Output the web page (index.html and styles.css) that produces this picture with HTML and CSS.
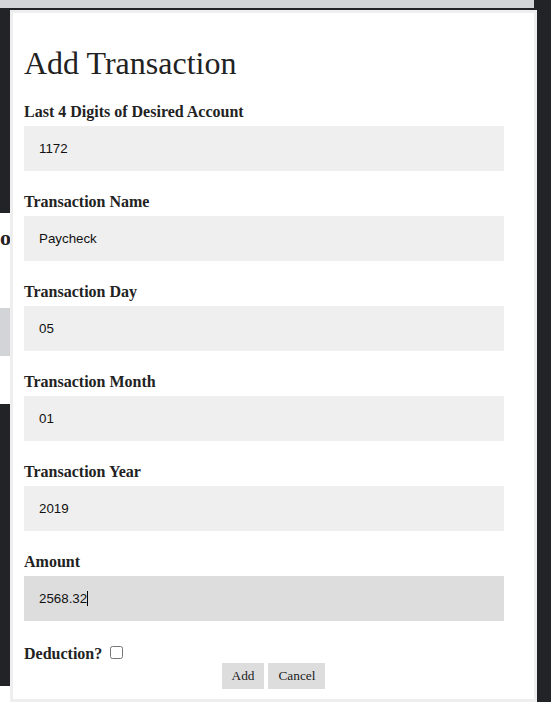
FILE: index.html
```html
<!DOCTYPE html>
<html lang="en">
<head>
<meta charset="utf-8">
<title>Add Transaction</title>
<link rel="stylesheet" href="styles.css">
</head>
<body>
<div class="page">
  <div class="topbar"></div>
  <div class="gap-top"></div>
  <div class="panel">
    <div class="panel-title">Do</div>
    <div class="panel-bar"></div>
  </div>
  <div class="gap-bottom"></div>
  <div class="footer"></div>
</div>

<div class="modal">
  <h1 class="modal-title">Add Transaction</h1>
  <form class="form">
    <label class="field">
      <span class="field-label">Last 4 Digits of Desired Account</span>
      <input class="field-input" type="text" value="1172">
    </label>
    <label class="field">
      <span class="field-label">Transaction Name</span>
      <input class="field-input" type="text" value="Paycheck">
    </label>
    <label class="field">
      <span class="field-label">Transaction Day</span>
      <input class="field-input" type="text" value="05">
    </label>
    <label class="field">
      <span class="field-label">Transaction Month</span>
      <input class="field-input" type="text" value="01">
    </label>
    <label class="field">
      <span class="field-label">Transaction Year</span>
      <input class="field-input" type="text" value="2019">
    </label>
    <label class="field">
      <span class="field-label">Amount</span>
      <span class="input-wrap">
        <input class="field-input field-input--active" id="amount" type="text" value="2568.32">
        <span class="caret"></span>
      </span>
    </label>
    <div class="deduction">
      <span class="field-label-inline">Deduction?</span> <input class="checkbox" type="checkbox">
    </div>
    <div class="actions">
      <button class="btn" type="button">Add</button>
      <button class="btn" type="button">Cancel</button>
    </div>
  </form>
</div>
</body>
</html>
```

FILE: styles.css
```css
html, body {
  margin: 0;
  padding: 0;
}

body {
  background: #222327;
  width: 551px;
  height: 702px;
  overflow: hidden;
  font-family: "Liberation Serif", "Times New Roman", serif;
  color: #222;
}

.page {
  display: flex;
  flex-direction: column;
}

.topbar {
  height: 8px;
  width: 534px;
  background: #d3d4d8;
}

.gap-top {
  height: 205px;
}

.panel {
  height: 191px;
  width: 520px;
  background: #fff;
  display: flex;
  flex-direction: column;
}

.panel-title {
  font-weight: bold;
  font-size: 22px;
  line-height: 26px;
  margin-top: 12px;
  margin-left: -16px;
  color: #222;
}

.panel-bar {
  margin-top: 57px;
  height: 48px;
  background: #d3d4d8;
}

.gap-bottom {
  height: 282px;
}

.footer {
  height: 20px;
  width: 520px;
  background: #fff;
}

.modal {
  position: absolute;
  left: 10px;
  top: 10px;
  width: 510px;
  height: 654px;
  border: 3px solid #eeeeee;
  background: #fff;
  padding: 32px 0 0 11px;
  box-sizing: content-box;
  overflow: hidden;
}

.modal-title {
  margin: 0;
  font-size: 32px;
  line-height: 36px;
  font-weight: normal;
  color: #222;
}

.form {
  margin: 0;
  display: flex;
  flex-direction: column;
}

.field {
  display: flex;
  flex-direction: column;
  margin-top: 22px;
}

.field-label,
.field-label-inline {
  font-size: 16px;
  line-height: 18px;
  font-weight: bold;
  color: #222;
}

.input-wrap {
  position: relative;
  display: flex;
  flex-direction: column;
}

.field-input {
  margin-top: 5px;
  width: 480px;
  height: 45px;
  box-sizing: border-box;
  border: none;
  outline: none;
  background: #efefef;
  padding: 0 15px;
  font-family: "Liberation Sans", Arial, sans-serif;
  font-size: 13.333px;
  color: #111;
}

.field-input--active {
  background: #dddddd;
}

.caret {
  position: absolute;
  left: 63px;
  top: 20px;
  width: 1px;
  height: 15px;
  background: #000;
}

.deduction {
  margin-top: 22px;
  height: 20px;
  line-height: 18px;
  font-size: 16px;
}

.checkbox {
  margin: 3px 3px 3px 4px;
  width: 13px;
  height: 13px;
  vertical-align: baseline;
}

.actions {
  width: 521px;
  margin-left: -11px;
  display: flex;
  justify-content: center;
  gap: 4px;
}

.btn {
  font-family: "Liberation Serif", "Times New Roman", serif;
  font-size: 13.333px;
  line-height: 16px;
  padding: 5px 10px;
  border: none;
  background: #dddddd;
  color: #222;
  margin: 0;
}
```
